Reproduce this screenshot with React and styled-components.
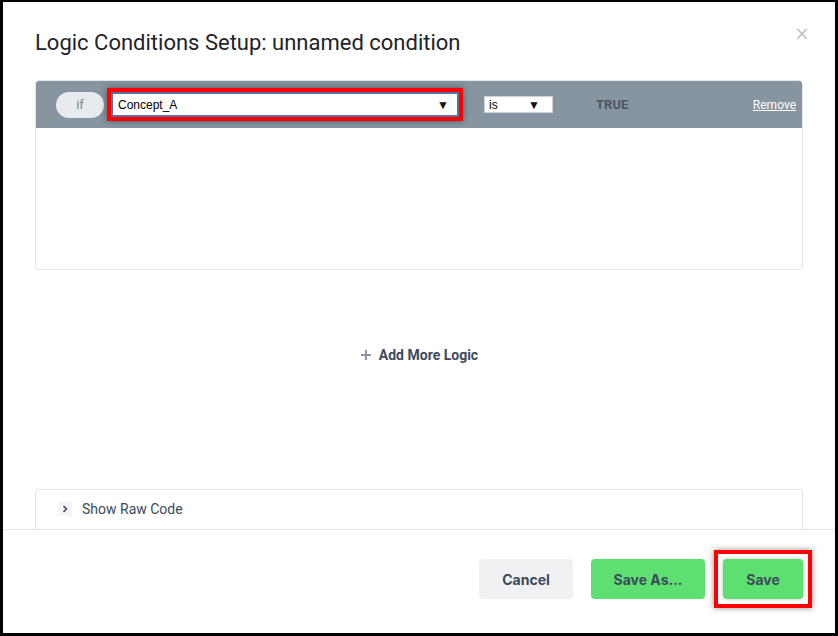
import React from 'react';
import styled, {createGlobalStyle} from 'styled-components';

const GlobalStyle = createGlobalStyle`
  html, body {
    margin: 0;
    padding: 0;
    background: #000;
  }
  * { box-sizing: border-box; }
`;

const Frame = styled.div`
  width: 838px;
  height: 636px;
  border-style: solid;
  border-color: #000;
  border-width: 2px 3px 3px 3px;
  background: #fff;
  display: flex;
  flex-direction: column;
  font-family: Roboto, "Liberation Sans", sans-serif;
`;

const Main = styled.div`
  height: 528px;
  padding: 29px 32px 0 32px;
  display: flex;
  flex-direction: column;
  border-bottom: 1px solid #e3e5e8;
`;

const TitleRow = styled.div`
  display: flex;
  justify-content: space-between;
  align-items: flex-start;
  height: 24px;
`;

const Title = styled.h1`
  margin: 0;
  font-size: 22px;
  line-height: 24px;
  font-weight: 400;
  color: #1e2329;
`;

const Close = styled.span`
  color: #c2c2c2;
  font-size: 19px;
  line-height: 14px;
  margin-top: -5px;
  margin-right: -7px;
  font-family: "DejaVu Sans", sans-serif;
`;

const Card = styled.div`
  margin-top: 25px;
  height: 190px;
  border: 1px solid #e3e5e8;
  border-radius: 4px;
  overflow: hidden;
`;

const CardHeader = styled.div`
  height: 47px;
  background: #8795a1;
  display: flex;
  align-items: center;
  padding: 0 6px 0 20px;
`;

const IfPill = styled.div`
  width: 48px;
  height: 26px;
  border-radius: 13px;
  background: #e8ebee;
  color: #7a8590;
  font-size: 13px;
  display: flex;
  align-items: center;
  justify-content: center;
`;

const Highlight = styled.div`
  border: 4px solid #ff0000;
  box-shadow: 0 0 6px rgba(0, 0, 0, 0.45);
  padding: ${p => p.$pad || 0}px;
  background: ${p => p.$bg || 'transparent'};
`;

const Select = styled.div`
  width: ${p => p.$w}px;
  height: ${p => p.$h}px;
  background: #fff;
  border: ${p => p.$focus ? '2px solid #5a6f9e' : '1px solid #d0d4d8'};
  display: flex;
  align-items: center;
  justify-content: space-between;
  padding: 0 ${p => p.$focus ? 8 : 12}px 0 ${p => p.$focus ? 5 : 4}px;
  font-family: "Liberation Sans", Arial, sans-serif;
  font-size: 12px;
  color: #000;
`;

const Arrow = styled.span`
  font-size: 12px;
  color: #111;
`;

const TrueLabel = styled.span`
  margin-left: 43px;
  font-size: 13px;
  font-weight: 700;
  color: #4d5660;
`;

const Remove = styled.a`
  margin-left: auto;
  font-size: 12px;
  color: #fff;
  text-decoration: underline;
`;

const AddArea = styled.div`
  height: 170px;
  padding-top: 2px;
  display: flex;
  align-items: center;
  justify-content: center;
  gap: 7px;
  font-size: 14px;
  font-weight: 700;
  color: #3c4a5a;
  margin-bottom: 50px;
`;

const RawPanel = styled.div`
  height: 40px;
  border: 1px solid #e3e5e8;
  border-bottom: none;
  border-radius: 4px 4px 0 0;
  display: flex;
  align-items: center;
  padding: 0 0 2px 22px;
  gap: 10px;
  font-size: 14px;
  color: #3c4a5a;
`;

const ChevronBox = styled.span`
  width: 14px;
  height: 14px;
  background: #f2f4f6;
  display: flex;
  align-items: center;
  justify-content: center;
`;

const Footer = styled.div`
  flex: 1;
  display: flex;
  align-items: center;
  justify-content: flex-end;
  padding: 0 32px 5px 0;
  gap: 18px;
`;

const Button = styled.button`
  height: 40px;
  width: ${p => p.$w}px;
  border: none;
  border-radius: 4px;
  background: ${p => p.$green ? '#5ddf72' : '#f0f1f3'};
  color: #3c4a5a;
  font-family: Inter, Roboto, sans-serif;
  font-size: 14px;
  font-weight: 700;
`;

const SaveHighlight = styled(Highlight)`
  margin: 0 -9px 0 -9px;
`;

const App = () => (
  <>
    <GlobalStyle />
    <Frame>
      <Main>
        <TitleRow>
          <Title>Logic Conditions Setup: unnamed condition</Title>
          <Close>×</Close>
        </TitleRow>
        <Card>
          <CardHeader>
            <IfPill>if</IfPill>
            <Highlight $pad={0} style={{marginLeft: 3}}>
              <Select $w={348} $h={25} $focus>
                <span>Concept_A</span>
                <Arrow>▼</Arrow>
              </Select>
            </Highlight>
            <Select $w={69} $h={17} style={{marginLeft: 21}}>
              <span>is</span>
              <Arrow>▼</Arrow>
            </Select>
            <TrueLabel>TRUE</TrueLabel>
            <Remove>Remove</Remove>
          </CardHeader>
        </Card>
        <AddArea>
          <svg width="12" height="12" viewBox="0 0 12 12">
            <path d="M6 1v10M1 6h10" stroke="#8a96a0" strokeWidth="2" />
          </svg>
          <span>Add More Logic</span>
        </AddArea>
        <RawPanel>
          <ChevronBox>
            <svg width="6" height="8" viewBox="0 0 6 8">
              <path d="M1.5 1l3 3-3 3" stroke="#3c4a5a" strokeWidth="1.6" fill="none" />
            </svg>
          </ChevronBox>
          <span>Show Raw Code</span>
        </RawPanel>
      </Main>
      <Footer>
        <Button $w={94}>Cancel</Button>
        <Button $w={114} $green>Save As...</Button>
        <SaveHighlight $pad={5} $bg="#fff">
          <Button $w={80} $green style={{boxShadow: '0 0 4px rgba(0,0,0,0.25)'}}>Save</Button>
        </SaveHighlight>
      </Footer>
    </Frame>
  </>
);

export default App;
